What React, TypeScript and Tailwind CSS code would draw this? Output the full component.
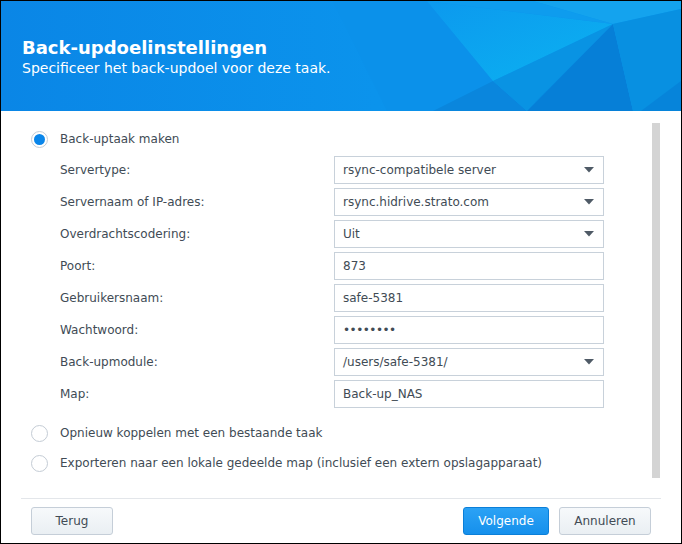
import React from "react";

const font = { fontFamily: '"DejaVu Sans", Verdana, sans-serif' };

function Radio({ checked, label }: { checked?: boolean; label: string }) {
  return (
    <div className="flex h-[30px] items-center pl-[30px]">
      <span className="flex h-[17px] w-[17px] items-center justify-center rounded-full border border-[#c4ccd5] bg-white">
        {checked && <span className="h-[11px] w-[11px] rounded-full bg-[#0a86ea]" />}
      </span>
      <span className="ml-[12px] text-[12px] text-[#414b55]">{label}</span>
    </div>
  );
}

function Field({ label, value, select, password }: { label: string; value: string; select?: boolean; password?: boolean }) {
  return (
    <div className="flex h-[28px] items-center">
      <div className="w-[333px] shrink-0 pl-[59px] text-[12px] text-[#414b55]">{label}</div>
      <div className="flex h-[28px] w-[270px] items-center border border-[#c8d1da] bg-white pl-[8px] pr-[9px]">
        <span className={password ? "flex-1 text-[12px] tracking-[-0.5px] text-[#414b55]" : "flex-1 text-[12px] text-[#414b55]"}>
          {value}
        </span>
        {select && (
          <svg width="10" height="6" viewBox="0 0 10 6">
            <polygon points="0,0 10,0 5,5.5" fill="#4f5a66" />
          </svg>
        )}
      </div>
    </div>
  );
}

function HeaderBg() {
  return (
    <svg className="absolute inset-0" width="680" height="110" viewBox="0 0 680 110" preserveAspectRatio="none">
      <defs>
        <linearGradient id="base" x1="0" y1="0" x2="1" y2="0">
          <stop offset="0" stopColor="#0a86e6" />
          <stop offset="0.55" stopColor="#0b93ec" />
          <stop offset="1" stopColor="#0a99ee" />
        </linearGradient>
        <linearGradient id="cyan" x1="0" y1="0" x2="1" y2="1">
          <stop offset="0" stopColor="#0c99ee" />
          <stop offset="1" stopColor="#0bb2f1" />
        </linearGradient>
      </defs>
      <rect width="680" height="110" fill="url(#base)" />
      <polygon points="332,0 426,0 492,80 432,110 386,110" fill="#0b91ea" />
      <polygon points="426,0 612,23 492,80" fill="url(#cyan)" />
      <polygon points="532,0 680,0 680,8 612,23" fill="#14a3ee" />
      <polygon points="426,0 532,0 612,23" fill="#0e9cee" />
      <polygon points="492,80 432,110 526,110" fill="#0a86dd" />
      <polygon points="492,80 612,23 526,110" fill="#0993e3" />
      <polygon points="612,23 526,110 632,110" fill="#067fd7" />
      <polygon points="612,23 680,8 680,110 632,110" fill="#0890e1" />
      <polygon points="640,110 680,80 680,110" fill="#0684da" />
    </svg>
  );
}

export default function App() {
  return (
    <div className="flex h-[544px] w-[682px] flex-col overflow-hidden border border-black bg-white" style={font}>
      <div className="relative h-[110px] shrink-0">
        <HeaderBg />
        <div className="relative pl-[21px] pt-[36px] text-white">
          <div className="text-[18px] font-bold leading-[22px]">Back-updoelinstellingen</div>
          <div className="text-[14px] leading-[18px]">Specificeer het back-updoel voor deze taak.</div>
        </div>
      </div>
      <div className="flex h-[387px] shrink-0">
        <div className="flex-1 pt-[13px]">
          <Radio checked label="Back-uptaak maken" />
          <div className="mt-[2px] flex flex-col gap-[4px]">
            <Field label="Servertype:" value="rsync-compatibele server" select />
            <Field label="Servernaam of IP-adres:" value="rsync.hidrive.strato.com" select />
            <Field label="Overdrachtscodering:" value="Uit" select />
            <Field label="Poort:" value="873" />
            <Field label="Gebruikersnaam:" value="safe-5381" />
            <Field label="Wachtwoord:" value="••••••••" password />
            <Field label="Back-upmodule:" value="/users/safe-5381/" select />
            <Field label="Map:" value="Back-up_NAS" />
          </div>
          <div className="mt-[10px]">
            <Radio label="Opnieuw koppelen met een bestaande taak" />
            <Radio label="Exporteren naar een lokale gedeelde map (inclusief een extern opslagapparaat)" />
          </div>
        </div>
        <div className="mr-[21px] mt-[12px] h-[355px] w-[8px] bg-[#d4d4d4]" />
      </div>
      <div className="mx-[20px] flex h-[45px] shrink-0 items-start border-t border-[#e3e6ea] px-[10px] pt-[8px]">
        <button className="h-[28px] w-[82px] rounded-[3px] border border-[#c5ced8] bg-gradient-to-b from-[#f7f9fb] to-[#eaeff3] text-[12px] text-[#414b55]">
          Terug
        </button>
        <div className="flex-1" />
        <button className="h-[28px] w-[86px] rounded-[3px] border border-[#0b7fd8] bg-gradient-to-b from-[#2ba2f5] to-[#1590ec] text-[12px] text-white">
          Volgende
        </button>
        <button className="ml-[10px] h-[28px] w-[92px] rounded-[3px] border border-[#c5ced8] bg-gradient-to-b from-[#f7f9fb] to-[#eaeff3] text-[12px] text-[#414b55]">
          Annuleren
        </button>
      </div>
    </div>
  );
}
